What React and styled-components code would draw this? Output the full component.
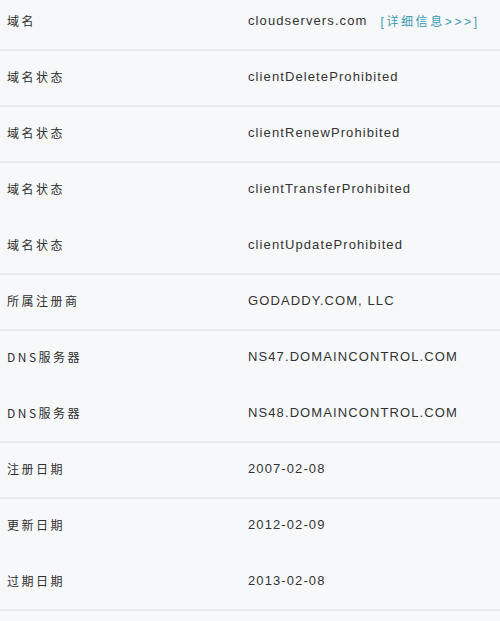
import styled, { createGlobalStyle } from "styled-components";

const Global = createGlobalStyle`
  html, body {
    margin: 0;
    padding: 0;
    background: #f7f8fa;
  }
  body {
    font-family: "Liberation Sans", Arial, "Noto Sans CJK SC", sans-serif;
    color: #333;
    overflow: hidden;
  }
`;

const Table = styled.div`
  display: flex;
  flex-direction: column;
  margin-top: -5px;
  width: 500px;
`;

const Row = styled.div`
  display: flex;
  align-items: center;
  box-sizing: border-box;
  height: 56px;
  padding-bottom: 4px;
  border-bottom: 2px solid ${(p) => (p.$line ? "#e6e8ec" : "transparent")};
`;

const Label = styled.div`
  width: 241px;
  padding-left: 7px;
  font-family: "Noto Sans CJK SC", "Liberation Sans", sans-serif;
  font-size: 12px;
  letter-spacing: 2.5px;
  color: #2e2e2e;
`;

const Value = styled.div`
  font-size: 13px;
  letter-spacing: 1.1px;
  color: #333;
  display: flex;
  align-items: center;
`;

const More = styled.a`
  margin-left: 13px;
  color: #3a9ab4;
  font-size: 12px;
  letter-spacing: 2.6px;
  text-decoration: none;
  font-family: "Liberation Sans", "Noto Sans CJK SC", sans-serif;
`;

const rows = [
  ["域名", "cloudservers.com", true],
  ["域名状态", "clientDeleteProhibited", true],
  ["域名状态", "clientRenewProhibited", true],
  ["域名状态", "clientTransferProhibited", false],
  ["域名状态", "clientUpdateProhibited", true],
  ["所属注册商", "GODADDY.COM, LLC", true],
  ["DNS服务器", "NS47.DOMAINCONTROL.COM", false],
  ["DNS服务器", "NS48.DOMAINCONTROL.COM", true],
  ["注册日期", "2007-02-08", true],
  ["更新日期", "2012-02-09", false],
  ["过期日期", "2013-02-08", true],
];

export default function App() {
  return (
    <>
      <Global />
      <Table>
        {rows.map(([label, value, line], i) => (
          <Row key={i} $line={line}>
            <Label>{label}</Label>
            <Value>
              {value}
              {i === 0 && <More href="#">[详细信息&gt;&gt;&gt;]</More>}
            </Value>
          </Row>
        ))}
      </Table>
    </>
  );
}
